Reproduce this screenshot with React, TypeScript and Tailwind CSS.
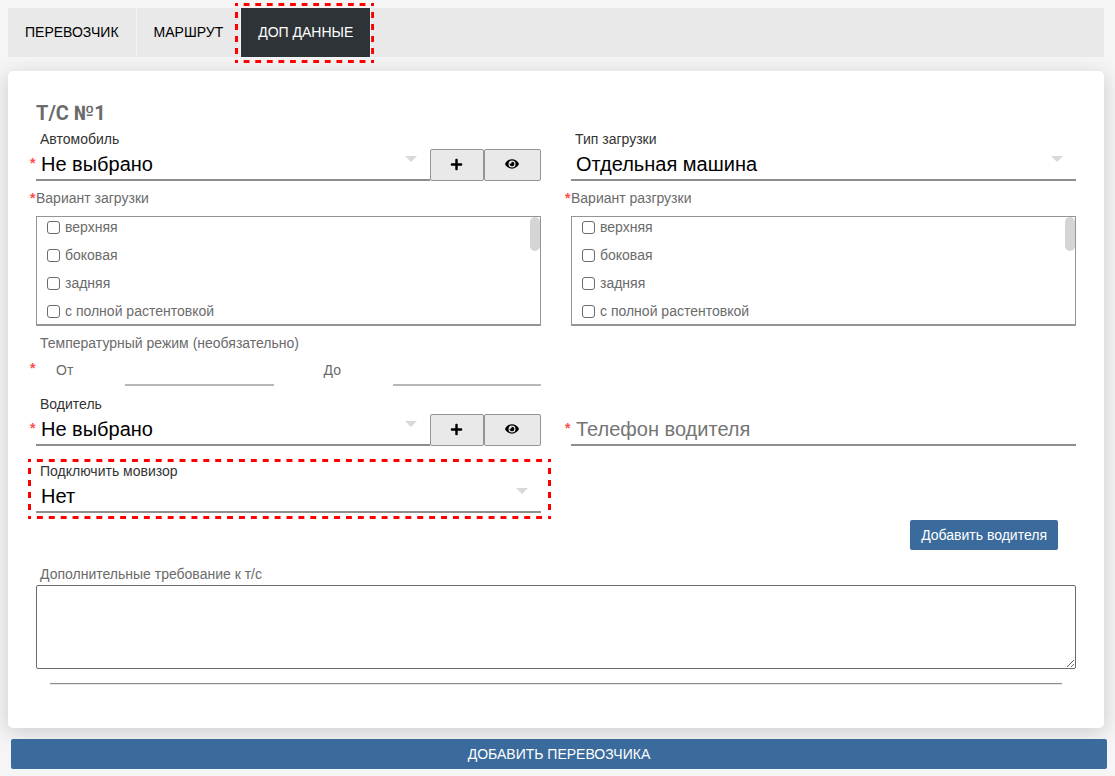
import type { ReactNode } from "react";
import { FaEye, FaPlus } from "react-icons/fa";

const tabs = ["Перевозчик", "Маршрут", "Доп данные"];
const variants = ["верхняя", "боковая", "задняя", "с полной растентовкой"];

/**********************************************************************************/

function Required({ className = "top-1" }: { className?: string }) {
  return (
    <span
      aria-hidden="true"
      className={`absolute -left-1.5 text-sm font-bold text-[#ff4d4d] ${className}`}
    >
      *
    </span>
  );
}

type HighlightProps = {
  // number of dashes along the horizontal and vertical sides
  columns: number;
  rows: number;
  className: string;
};

function Highlight({ columns, rows, className }: HighlightProps) {
  const dash = { strokeDasharray: "6 6", strokeDashoffset: 3 };

  return (
    <div className={`pointer-events-none absolute ${className}`}>
      <svg className="size-full stroke-[#ff0000] stroke-6">
        <line x2="100%" pathLength={columns * 12} {...dash} />
        <line y1="100%" x2="100%" y2="100%" pathLength={columns * 12} {...dash} />
        <line y2="100%" pathLength={rows * 12} {...dash} />
        <line x1="100%" x2="100%" y2="100%" pathLength={rows * 12} {...dash} />
      </svg>
    </div>
  );
}

type SelectFieldProps = {
  id: string;
  label: string;
  value: string;
  required?: boolean;
  actions?: boolean;
};

function SelectField({ id, label, value, required, actions }: SelectFieldProps) {
  return (
    <div>
      <label htmlFor={id} className="block pl-1 text-sm text-[#333333]">
        {label}
      </label>
      <div className="flex">
        <div className="relative flex-1">
          {required && <Required />}
          <select
            id={id}
            className="block h-8 w-full appearance-none border-b-2 border-[#8e8e8e] bg-transparent pl-[5px] text-xl/6 text-black"
          >
            <option>{value}</option>
          </select>
          <svg
            viewBox="0 0 12 6"
            className="pointer-events-none absolute right-[13px] top-[7px] h-1.5 w-3 fill-[#d9d9d9]"
          >
            <path d="M0 0h12L6 6z" />
          </svg>
        </div>
        {actions && (
          <>
            <IconButton label="Добавить" className="w-[54px]">
              <FaPlus className="size-[13px]" />
            </IconButton>
            <IconButton label="Просмотр" className="w-[57px]">
              <FaEye className="size-3.5" />
            </IconButton>
          </>
        )}
      </div>
    </div>
  );
}

type IconButtonProps = {
  label: string;
  className: string;
  children: ReactNode;
};

function IconButton({ label, className, children }: IconButtonProps) {
  return (
    <button
      type="button"
      aria-label={label}
      className={`flex h-8 items-center justify-center rounded-xs border border-[#949494] bg-[#e9e9e9] pb-0.5 pr-0.5 text-black ${className}`}
    >
      {children}
    </button>
  );
}

function VariantList({ title }: { title: string }) {
  return (
    <fieldset className="mt-[7px]">
      <legend className="relative text-sm">
        <Required className="top-0" />
        {title}
      </legend>
      <div className="relative mt-2 h-[110px] overflow-hidden border border-b-2 border-[#949494] pl-2.5">
        {variants.map((name) => (
          <label key={name} className="mb-2 flex items-center gap-[5px] text-sm">
            <input
              type="checkbox"
              className="size-[13px] appearance-none rounded-[3px] border border-[#6b6b6b] bg-white checked:bg-[#3a6b9c]"
            />
            {name}
          </label>
        ))}
        <div className="absolute right-0 top-0 h-[34px] w-2.5 rounded-full bg-[#d5d5d5]" />
      </div>
    </fieldset>
  );
}

function TemperatureInput({ id, label }: { id: string; label: string }) {
  return (
    <div className="flex flex-1 items-center pl-5">
      <label htmlFor={id} className="w-[69px] text-sm">
        {label}
      </label>
      <input
        id={id}
        className="h-8 w-0 flex-1 border-b-2 border-[#b8b8b8] text-xl outline-none"
      />
    </div>
  );
}

/**********************************************************************************/

export default function App() {
  return (
    <div className="min-h-screen bg-[#f5f5f5] py-2 pl-2 pr-[11px] font-['Liberation_Sans',Arial,sans-serif] text-[#6b6b6b]">
      <nav className="flex gap-px bg-[#e9e9e9]">
        {tabs.map((tab) => {
          const active = tab === "Доп данные";
          return (
            <button
              key={tab}
              type="button"
              className={`relative h-[49px] px-[17px] pb-0.5 text-sm uppercase outline-1 outline-[#f5f5f5] ${
                active ? "bg-[#2e3338] text-white" : "text-black"
              }`}
            >
              {tab}
              {active && (
                <Highlight
                  columns={12}
                  rows={5}
                  className="-bottom-1.5 -left-1.5 -right-1 -top-[5px]"
                />
              )}
            </button>
          );
        })}
      </nav>

      <main className="mt-3.5 rounded-[5px] bg-white px-7 pb-[43px] pt-[27px] shadow-[0_4px_20px_rgba(40,40,60,0.2)]">
        <h2 className="mb-px font-['Roboto',sans-serif] text-xl/[30px] font-bold">
          Т/С №1
        </h2>

        <div className="grid grid-cols-2 gap-x-[30px]">
          <div>
            <SelectField
              id="car"
              label="Автомобиль"
              value="Не выбрано"
              required
              actions
            />
            <VariantList title="Вариант загрузки" />
          </div>
          <div>
            <SelectField
              id="loading"
              label="Тип загрузки"
              value="Отдельная машина"
            />
            <VariantList title="Вариант разгрузки" />
          </div>
        </div>

        <div className="grid grid-cols-2 gap-x-[30px]">
          <div>
            <div className="mt-[7px] pl-1 text-sm">
              Температурный режим (необязательно)
            </div>
            <div className="relative mt-px flex gap-[30px]">
              <Required />
              <TemperatureInput id="temp-from" label="От" />
              <TemperatureInput id="temp-to" label="До" />
            </div>
          </div>
        </div>

        <div className="mt-2 grid grid-cols-2 items-end gap-x-[30px]">
          <SelectField
            id="driver"
            label="Водитель"
            value="Не выбрано"
            required
            actions
          />
          <div className="relative">
            <Required />
            <input
              type="tel"
              aria-label="Телефон водителя"
              placeholder="Телефон водителя"
              className="block h-8 w-full border-b-2 border-[#8e8e8e] pl-[5px] text-xl/6 outline-none placeholder:text-[#757575]"
            />
          </div>
        </div>

        <div className="mt-[15px] grid grid-cols-2 gap-x-[30px]">
          <div className="relative">
            <SelectField id="movizor" label="Подключить мовизор" value="Нет" />
            <Highlight
              columns={44}
              rows={5}
              className="-bottom-1.5 -left-2 -right-2.5 -top-0.5"
            />
          </div>
        </div>

        <div className="mt-[7px] flex justify-end pr-[18px]">
          <button
            type="button"
            className="h-[30px] rounded-xs bg-[#3a6b9c] px-[11px] text-sm text-white"
          >
            Добавить водителя
          </button>
        </div>

        <label htmlFor="requirements" className="mt-3.5 block pl-1 text-sm">
          Дополнительные требование к т/с
        </label>
        <textarea
          id="requirements"
          className="mt-px block h-[84px] w-full rounded-[2px] border border-[#6b6b6b] bg-white p-1 text-sm outline-none"
        />
        <hr className="mx-3.5 mt-3.5 border-b border-t border-b-[#e5e5e5] border-t-[#8e8e8e]" />
      </main>

      <button
        type="button"
        className="relative left-[3px] mt-[11px] block h-[30px] w-full rounded-xs bg-[#3a6b9c] text-sm uppercase text-white"
      >
        Добавить перевозчика
      </button>
    </div>
  );
}
